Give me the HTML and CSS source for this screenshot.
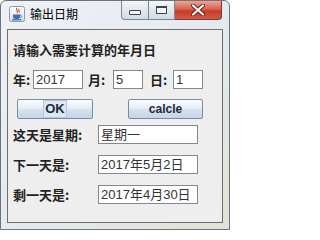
FILE: index.html
```html
<!DOCTYPE html>
<html>
<head>
<meta charset="utf-8">
<link rel="stylesheet" href="styles.css">
</head>
<body>
<div class="window">
  <div class="titlebar">
    <svg class="appicon" width="16" height="16" viewBox="0 0 16 16">
      <defs><linearGradient id="ig" x1="0" y1="0" x2="0" y2="1"><stop offset="0" stop-color="#ffffff"/><stop offset="1" stop-color="#d8dee8"/></linearGradient></defs>
      <rect x="0.5" y="0.5" width="15" height="15" rx="2" fill="url(#ig)" stroke="#8d98a8"/>
      <path d="M8 2 C6 4 10 5 8 7 M10 3 C9 4.5 11 5 10 6.5" fill="none" stroke="#e0501f" stroke-width="1.2"/>
      <path d="M4 8.5 H11 V11 C11 12.5 9.5 13 7.5 13 C5.5 13 4 12.5 4 11 Z" fill="#3a6fb5"/>
      <path d="M11 9 C13 9 13 11.5 11 11.5" fill="none" stroke="#3a6fb5" stroke-width="1"/>
      <path d="M3 13.8 H12.5" stroke="#2b5590" stroke-width="1"/>
    </svg>
    <span class="title">输出日期</span>
    <div class="caption">
      <div class="cbtn min"><span class="minglyph"></span></div>
      <div class="cbtn max"><span class="maxglyph"></span></div>
      <div class="cbtn close">
        <svg width="14" height="12" viewBox="0 0 14 12">
          <path d="M2 1.5 L12 10.5 M12 1.5 L2 10.5" stroke="#6b1d14" stroke-width="4" stroke-linecap="round"/>
          <path d="M2 1.5 L12 10.5 M12 1.5 L2 10.5" stroke="#ffffff" stroke-width="2.2" stroke-linecap="round"/>
        </svg>
      </div>
    </div>
  </div>
  <div class="panel">
    <div class="heading">请输入需要计算的年月日</div>
    <div class="row1">
      <span class="lbl l1">年:</span><div class="field f-year">2017</div>
      <span class="lbl l2">月:</span><div class="field f-small">5</div>
      <span class="lbl l3">日:</span><div class="field f-small">1</div>
    </div>
    <div class="btnrow">
      <div class="btn b-ok"><span class="focus">OK</span></div>
      <div class="btn b-calc">calcle</div>
    </div>
    <div class="frow first"><span class="lbl wide">这天是星期:</span><div class="field f-wide">星期一</div></div>
    <div class="frow"><span class="lbl wide">下一天是:</span><div class="field f-wide">2017年5月2日</div></div>
    <div class="frow"><span class="lbl wide">剩一天是:</span><div class="field f-wide">2017年4月30日</div></div>
  </div>
</div>
</body>
</html>
```
FILE: styles.css
```css
html, body {
  margin: 0;
  padding: 0;
  width: 230px;
  height: 230px;
  overflow: hidden;
  background: #ffffff;
}
.window {
  box-sizing: border-box;
  width: 230px;
  height: 230px;
  border: 1px solid #6e737a;
  border-radius: 6px 6px 0 0;
  background: linear-gradient(135deg, #eef2f7 0%, #e4e9f0 55%, #dfe4d2 100%);
  font-family: "Noto Sans CJK SC", "Liberation Sans", sans-serif;
}
.titlebar {
  display: flex;
  align-items: flex-start;
  height: 28px;
}
.appicon {
  margin: 5px 0 0 8px;
}
.title {
  margin: 5px 0 0 5px;
  font-size: 12px;
  line-height: 16px;
  color: #000;
}
.caption {
  display: flex;
  margin-left: auto;
  margin-right: 7px;
}
.cbtn {
  box-sizing: border-box;
  height: 19px;
  display: flex;
  align-items: center;
  justify-content: center;
  border: 1px solid #7d8694;
  border-top: none;
}
.min {
  width: 28px;
  border-radius: 0 0 0 4px;
  background: linear-gradient(#f4f6f9, #e2e7ee 50%, #d3dae4);
}
.max {
  width: 26px;
  border-left: none;
  background: linear-gradient(#f4f6f9, #e2e7ee 50%, #d3dae4);
}
.close {
  width: 47px;
  border-left: none;
  border-color: #7a3a32;
  border-radius: 0 0 4px 0;
  background: linear-gradient(#eba596, #d7644f 45%, #c43b2b 55%, #d55a45);
}
.minglyph {
  box-sizing: border-box;
  width: 12px;
  height: 5px;
  margin-top: 4px;
  border: 1px solid #3b4452;
  border-radius: 1px;
  background: #f4f6f9;
}
.maxglyph {
  box-sizing: border-box;
  width: 11px;
  height: 8px;
  border: 1px solid #3b4452;
  border-top-width: 2px;
  background: #f4f6f9;
}
.panel {
  box-sizing: border-box;
  height: 194px;
  margin: 0 6px;
  padding: 12px 0 0 5px;
  border: 1px solid #6f6f6f;
  background: #eeeeee;
}
.heading {
  height: 16px;
  line-height: 16px;
  font-size: 13px;
  font-weight: bold;
  color: #222;
}
.lbl {
  font-size: 13px;
  font-weight: bold;
  color: #222;
  line-height: 19px;
  white-space: nowrap;
}
.row1 {
  display: flex;
  align-items: center;
  height: 19px;
  margin-top: 12px;
}
.l1 { width: 20px; }
.l2 { width: 25px; margin-left: 5px; }
.l3 { width: 23px; margin-left: 7px; }
.field {
  box-sizing: border-box;
  height: 19px;
  padding-left: 2px;
  border: 1px solid #7f8995;
  background: #ffffff;
  font-family: "Liberation Sans", "Noto Sans CJK SC", sans-serif;
  font-size: 13px;
  line-height: 17px;
  color: #333;
  white-space: nowrap;
  overflow: hidden;
}
.f-year { width: 50px; }
.f-small { width: 30px; }
.f-wide { width: 100px; }
.btnrow {
  display: flex;
  height: 20px;
  margin-top: 10px;
}
.btn {
  box-sizing: border-box;
  height: 20px;
  display: flex;
  align-items: center;
  justify-content: center;
  border: 1px solid #7b8ca2;
  border-radius: 2px;
  background: linear-gradient(#fbfcfe, #e8eef6 45%, #d5e0ee 55%, #c6d4e8);
  font-family: "Liberation Sans", sans-serif;
  font-size: 12px;
  font-weight: bold;
  color: #1f2a38;
}
.b-ok {
  width: 76px;
  margin-left: 4px;
}
.b-calc {
  width: 75px;
  margin-left: 35px;
}
.focus {
  box-sizing: border-box;
  height: 18px;
  line-height: 16px;
  padding: 0 1px;
  border: 1px solid #b4c6de;
  background: #dde7f4;
  font-size: 13px;
}
.frow {
  display: flex;
  align-items: center;
  height: 19px;
  margin-top: 11px;
}
.frow.first {
  margin-top: 6px;
}
.lbl.wide {
  width: 85px;
}
```
